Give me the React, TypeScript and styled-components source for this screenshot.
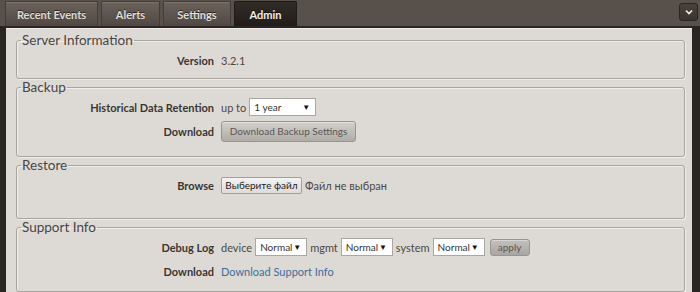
import React from 'react';
import styled, { createGlobalStyle } from 'styled-components';

const GlobalStyle = createGlobalStyle`
  html, body {
    margin: 0;
    padding: 0;
    background: #58504a;
    font-family: Lato, "Liberation Sans", sans-serif;
  }
`;

const Shell = styled.div`
  width: 700px;
  height: 292px;
  overflow: hidden;
  display: flex;
  flex-direction: column;
`;

const TopBar = styled.div`
  height: 28px;
  display: flex;
  align-items: flex-end;
  gap: 3px;
  padding: 0 2px 0 5px;
  background: #58504a;
`;

const Tab = styled.div<{ $active?: boolean; $w: number }>`
  width: ${p => p.$w}px;
  height: 25px;
  box-sizing: border-box;
  display: flex;
  align-items: center;
  justify-content: center;
  font-size: 11px;
  font-weight: 700;
  color: ${p => (p.$active ? '#f2efec' : '#e2ddd8')};
  text-shadow: 0 -1px 0 rgba(0, 0, 0, 0.6);
  border: 1px solid ${p => (p.$active ? '#1e1a17' : '#433c37')};
  border-bottom: none;
  border-radius: 2px 2px 0 0;
  background: ${p =>
    p.$active
      ? 'linear-gradient(#322c28, #211d1a)'
      : 'linear-gradient(#6a625b, #504842)'};
  box-shadow: ${p => (p.$active ? 'none' : 'inset 0 1px 0 #7c736b')};
`;

const MenuButton = styled.div`
  margin-left: auto;
  align-self: flex-start;
  margin-top: 3px;
  width: 19px;
  height: 18px;
  box-sizing: border-box;
  border: 1px solid #2a2521;
  border-radius: 3px;
  background: linear-gradient(#48413c, #3a3430);
  display: flex;
  align-items: center;
  justify-content: center;
`;

const Frame = styled.div`
  flex: 1;
  background: #2a2522;
  padding: 2px 8px 0 6px;
  display: flex;
`;

const Panel = styled.div`
  flex: 1;
  background: #dddad6;
  border-top: 1px solid #efece9;
  padding: 4px 7px 0 10px;
  display: flex;
  flex-direction: column;
  gap: 1px;
`;

const Group = styled.fieldset<{ $bottom: number }>`
  margin: 0;
  padding: 0 0 ${p => p.$bottom}px 0;
  border: 1px solid #a8a5a1;
  border-radius: 3px;
  box-shadow: inset 1px 1px 0 #f0eeeb, 1px 1px 0 #f0eeeb;
`;

const Legend = styled.legend`
  padding: 0 1px;
  margin-left: 4px;
  font-size: 13.5px;
  line-height: 15px;
  color: #4a4541;
`;

const Row = styled.div`
  display: grid;
  grid-template-columns: 197px auto;
  column-gap: 7px;
  align-items: center;
  height: 24px;
`;

const Label = styled.div`
  text-align: right;
  font-size: 11px;
  font-weight: 700;
  color: #3a3632;
`;

const Values = styled.div`
  display: flex;
  align-items: center;
  gap: 3px;
  font-size: 11px;
  color: #4d4844;
`;

const Select = styled.div<{ $w: number }>`
  width: ${p => p.$w}px;
  height: 18px;
  box-sizing: border-box;
  background: #fff;
  border: 1px solid #a9a6a3;
  display: flex;
  align-items: center;
  justify-content: space-between;
  padding: 0 5px 0 4px;
  font-size: 10px;
  color: #333;
`;

const Arrow = styled.span`
  font-size: 8px;
  color: #111;
`;

const GrayButton = styled.div<{ $small?: boolean }>`
  box-sizing: border-box;
  height: ${p => (p.$small ? 17 : 21)}px;
  width: ${p => (p.$small ? 40 : 135)}px;
  margin-left: ${p => (p.$small ? 2 : 0)}px;
  display: flex;
  align-items: center;
  justify-content: center;
  border: 1px solid #98958f;
  border-radius: 3px;
  background: ${p =>
    p.$small ? 'linear-gradient(#c4c1bd, #a9a6a2)' : 'linear-gradient(#d3d0cc, #afaca8)'};
  box-shadow: inset 0 1px 0 rgba(255, 255, 255, 0.35);
  font-size: 10px;
  color: #5a5652;
  white-space: nowrap;
`;

const FileButton = styled.div`
  box-sizing: border-box;
  height: 17px;
  width: 81px;
  display: flex;
  align-items: center;
  justify-content: center;
  border: 1px solid #a3a09c;
  border-radius: 2px;
  background: linear-gradient(#f4f3f2, #dedcda);
  font-size: 10px;
  color: #222;
`;

const Link = styled.a`
  font-size: 11px;
  color: #3f6c9c;
  text-decoration: none;
`;

const Chevron = () => (
  <svg width="8" height="6" viewBox="0 0 8 6">
    <path d="M1 1.5 L4 4.5 L7 1.5" fill="none" stroke="#eee" strokeWidth="1.6" />
  </svg>
);

const LevelSelect = () => (
  <Select $w={52}>
    <span>Normal</span>
    <Arrow>▼</Arrow>
  </Select>
);

export default function App() {
  return (
    <Shell>
      <GlobalStyle />
      <TopBar>
        <Tab $w={93}>Recent Events</Tab>
        <Tab $w={59}>Alerts</Tab>
        <Tab $w={68}>Settings</Tab>
        <Tab $w={63} $active>Admin</Tab>
        <MenuButton>
          <Chevron />
        </MenuButton>
      </TopBar>
      <Frame>
        <Panel>
          <Group $bottom={6}>
            <Legend>Server Information</Legend>
            <Row>
              <Label>Version</Label>
              <Values>3.2.1</Values>
            </Row>
          </Group>
          <Group $bottom={13}>
            <Legend>Backup</Legend>
            <Row>
              <Label>Historical Data Retention</Label>
              <Values>
                up to
                <Select $w={67}>
                  <span>1 year</span>
                  <Arrow>▼</Arrow>
                </Select>
              </Values>
            </Row>
            <Row>
              <Label>Download</Label>
              <Values>
                <GrayButton>Download Backup Settings</GrayButton>
              </Values>
            </Row>
          </Group>
          <Group $bottom={21}>
            <Legend>Restore</Legend>
            <Row>
              <Label>Browse</Label>
              <Values>
                <FileButton>Выберите файл</FileButton>
                Файл не выбран
              </Values>
            </Row>
          </Group>
          <Group $bottom={8}>
            <Legend>Support Info</Legend>
            <Row>
              <Label>Debug Log</Label>
              <Values>
                device
                <LevelSelect />
                mgmt
                <LevelSelect />
                system
                <LevelSelect />
                <GrayButton $small>apply</GrayButton>
              </Values>
            </Row>
            <Row>
              <Label>Download</Label>
              <Values>
                <Link href="#">Download Support Info</Link>
              </Values>
            </Row>
          </Group>
        </Panel>
      </Frame>
    </Shell>
  );
}
